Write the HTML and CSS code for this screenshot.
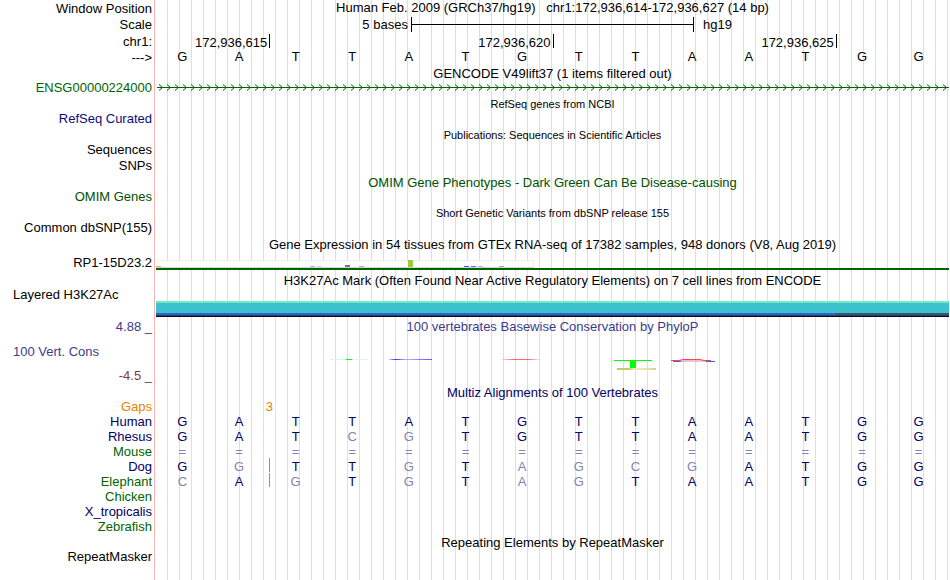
FILE: index.html
```html
<!DOCTYPE html>
<html lang="en">
<head>
<meta charset="utf-8">
<title>Genome tracks chr1:172,936,614-172,936,627</title>
<link rel="stylesheet" href="styles.css">
</head>
<body>
<main class="browser">
  <div class="row mid"><div class="label low">Window Position</div><div class="data title">Human Feb. 2009 (GRCh37/hg19) &nbsp; chr1:172,936,614-172,936,627 (14 bp)</div></div>
  <div class="row tall"><div class="label low">Scale</div><div class="data scale"><span class="scale-size">5 bases</span><span class="scale-bar"><span class="scale-line"></span></span><span class="scale-db">hg19</span></div></div>
  <div class="row tall"><div class="label low">chr1:</div><div class="data ruler"><span class="tick t1">172,936,615</span><span class="tick t2">172,936,620</span><span class="tick t3">172,936,625</span></div></div>
  <div class="row mid"><div class="label">---&gt;</div><div class="data bases ref"><span>G</span><span>A</span><span>T</span><span>T</span><span>A</span><span>T</span><span>G</span><span>T</span><span>T</span><span>A</span><span>A</span><span>T</span><span>G</span><span>G</span></div></div>
  <div class="row"><div class="label"></div><div class="data title">GENCODE V49lift37 (1 items filtered out)</div></div>
  <div class="row high"><div class="label green">ENSG00000224000</div><div class="data">
    <svg class="gene" width="100%" height="15" aria-hidden="true">
      <defs><pattern id="chevron" x="0" y="0" width="8" height="15" patternUnits="userSpaceOnUse"><path d="M3 3.5 L6.5 6.5 L3 9.5" fill="none" stroke="#006400" stroke-width="1"/></pattern></defs>
      <rect x="1" y="0" width="100%" height="15" fill="url(#chevron)"/>
      <rect x="1" y="6" width="100%" height="1" fill="#006400"/>
    </svg></div></div>
  <div class="row mid"><div class="label"></div><div class="data title small">RefSeq genes from NCBI</div></div>
  <div class="row high"><div class="label blue">RefSeq Curated</div><div class="data"></div></div>
  <div class="row lead"><div class="label"></div><div class="data title small">Publications: Sequences in Scientific Articles</div></div>
  <div class="row mid"><div class="label">Sequences</div><div class="data"></div></div>
  <div class="row mid"><div class="label">SNPs</div><div class="data"></div></div>
  <div class="row mid"><div class="label"></div><div class="data title omim low">OMIM Gene Phenotypes - Dark Green Can Be Disease-causing</div></div>
  <div class="row high"><div class="label omim">OMIM Genes</div><div class="data"></div></div>
  <div class="row mid"><div class="label"></div><div class="data title small">Short Genetic Variants from dbSNP release 155</div></div>
  <div class="row high"><div class="label">Common dbSNP(155)</div><div class="data"></div></div>
  <div class="row tall"><div class="label"></div><div class="data title">Gene Expression in 54 tissues from GTEx RNA-seq of 17382 samples, 948 donors (V8, Aug 2019)</div></div>
  <div class="row expression"><div class="label">RP1-15D23.2</div><div class="data">
    <div class="gtex">
      <svg width="378" height="8" shape-rendering="crispEdges" aria-hidden="true">
        <rect width="378" height="8" fill="#f0f0f0"/><rect y="1" width="377" height="6" fill="#fff"/><rect y="7" width="378" height="1" fill="#d3d3d3"/>
        <rect x="0" y="6" width="5" height="1" fill="#ffa54f"/><rect x="154" y="6" width="5" height="1" fill="#9ac0cd"/><rect x="161" y="6" width="5" height="1" fill="#eed5d2"/>
        <rect x="189" y="5" width="5" height="2" fill="#8b7355"/><rect x="203" y="6" width="5" height="1" fill="#cdaa7d"/><rect x="252" y="0" width="5" height="7" fill="#9acd32"/>
        <rect x="308" y="6" width="5" height="1" fill="#3a5fcd"/><rect x="315" y="6" width="5" height="1" fill="#1e90ff"/><rect x="322" y="6" width="5" height="1" fill="#cdb79e"/><rect x="343" y="6" width="5" height="1" fill="#a6a6a6"/>
      </svg>
    </div></div></div>
  <div class="row mid"><div class="label"></div><div class="data title">H3K27Ac Mark (Often Found Near Active Regulatory Elements) on 7 cell lines from ENCODE</div></div>
  <div class="row histone"><div class="label wide">Layered H3K27Ac</div><div class="data">
    <svg class="stretch" width="100%" height="16" viewBox="0 0 793 16" preserveAspectRatio="none" shape-rendering="crispEdges" aria-hidden="true">
      <rect width="793" height="2" fill="#72e8c8"/><rect y="2" width="793" height="10" fill="#3cc2cc"/>
      <rect y="12" width="793" height="2" fill="#2f62cc"/><rect x="680" y="12" width="113" height="2" fill="#34566e"/><rect y="14" width="793" height="1" fill="#284070"/><rect y="15" width="793" height="1" fill="#100820"/>
    </svg></div></div>
  <div class="row conservation"><div class="label limits"><span class="slate">4.88 _</span><span class="name slate">100 Vert. Cons</span><span class="brown">-4.5 _</span></div><div class="data">
    <div class="title slate">100 vertebrates Basewise Conservation by PhyloP</div>
    <svg class="stretch wiggle" width="100%" height="14" viewBox="0 0 793 14" preserveAspectRatio="none" aria-hidden="true">
      <defs>
        <linearGradient id="b"><stop offset="0" stop-color="#44f" stop-opacity=".3"/><stop offset=".15" stop-color="#33f"/><stop offset=".4" stop-color="#44f" stop-opacity=".4"/><stop offset="1" stop-color="#44f" stop-opacity=".9"/></linearGradient>
        <linearGradient id="r"><stop offset="0" stop-color="#f44" stop-opacity=".1"/><stop offset=".3" stop-color="#f44" stop-opacity=".8"/><stop offset=".7" stop-color="#f44" stop-opacity=".8"/><stop offset="1" stop-color="#f44" stop-opacity=".1"/></linearGradient>
        <linearGradient id="y"><stop offset="0" stop-color="#bdbd3a"/><stop offset=".3" stop-color="#bdbd3a"/><stop offset=".45" stop-color="#e9e9b5"/><stop offset=".8" stop-color="#dcdc98"/><stop offset="1" stop-color="#c8c860"/></linearGradient>
      </defs>
      <rect x="174" y="1" width="38" height="1" fill="#dff7df"/><rect x="190" y="1" width="6" height="1" fill="#0f0"/>
      <rect x="233" y="1" width="43" height="1" fill="url(#b)"/><rect x="345" y="1" width="39" height="1" fill="url(#r)"/>
      <rect x="458" y="2" width="38" height="1" fill="#0f0"/><rect x="474" y="2" width="6" height="8" fill="#0f0"/><rect x="461" y="10" width="39" height="2" fill="url(#y)" opacity=".8"/>
      <path d="M517 3.5 H559" stroke="#55f" stroke-opacity=".3"/><path d="M517 3.5 H525 M550 3.5 H559" fill="none" stroke="#55f"/>
      <path d="M523 2.5 H548" stroke="#fbb"/><path d="M515 2.5 H523 L527 1.5 H544 L548 2.5 H555" fill="none" stroke="#f44"/>
    </svg></div></div>
  <div class="row lead"><div class="label"></div><div class="data title navy">Multiz Alignments of 100 Vertebrates</div></div>
  <div class="row"><div class="label gap">Gaps</div><div class="data ruler gap"><span class="gap-count">3</span></div></div>
  <div class="row"><div class="label navy">Human</div><div class="data bases navy"><span>G</span><span>A</span><span>T</span><span>T</span><span>A</span><span>T</span><span>G</span><span>T</span><span>T</span><span>A</span><span>A</span><span>T</span><span>G</span><span>G</span></div></div>
  <div class="row"><div class="label navy">Rhesus</div><div class="data bases navy"><span>G</span><span>A</span><span>T</span><span class="diff">C</span><span class="diff">G</span><span>T</span><span>G</span><span>T</span><span>T</span><span>A</span><span>A</span><span>T</span><span>G</span><span>G</span></div></div>
  <div class="row"><div class="label green">Mouse</div><div class="data bases diff"><span>=</span><span>=</span><span>=</span><span>=</span><span>=</span><span>=</span><span>=</span><span>=</span><span>=</span><span>=</span><span>=</span><span>=</span><span>=</span><span>=</span></div></div>
  <div class="row"><div class="label navy">Dog</div><div class="data bases navy"><span>G</span><span class="diff insert">G</span><span>T</span><span>T</span><span class="diff">G</span><span>T</span><span class="diff">A</span><span class="diff">G</span><span class="diff">C</span><span class="diff">G</span><span>A</span><span>T</span><span>G</span><span>G</span></div></div>
  <div class="row"><div class="label green">Elephant</div><div class="data bases navy"><span class="diff">C</span><span class="insert">A</span><span class="diff">G</span><span>T</span><span class="diff">G</span><span>T</span><span class="diff">A</span><span class="diff">G</span><span>T</span><span>A</span><span>A</span><span>T</span><span>G</span><span>G</span></div></div>
  <div class="row"><div class="label green">Chicken</div><div class="data"></div></div>
  <div class="row"><div class="label navy">X_tropicalis</div><div class="data"></div></div>
  <div class="row"><div class="label green">Zebrafish</div><div class="data"></div></div>
  <div class="row lead"><div class="label"></div><div class="data title">Repeating Elements by RepeatMasker</div></div>
  <div class="row"><div class="label">RepeatMasker</div><div class="data"></div></div>
</main>
</body>
</html>
```
FILE: styles.css
```css
body {
  margin: 0;
  background: #fff;
  color: #000;
  font: 13px/15px "Liberation Sans", Arial, sans-serif;
}

/* Pink divider after the label column, then a guide line every 12px. */
.browser {
  min-height: 100vh;
  background:
    linear-gradient(#ffb4b4, #ffb4b4) 154px 0 / 1px 100% no-repeat,
    repeating-linear-gradient(90deg, #dcdcf8 0 1px, transparent 1px 12px) 167px 0 no-repeat;
}

.row {
  display: grid;
  grid-template-columns: 152px minmax(0, 1fr);
  column-gap: 4px;
  min-height: 15px;
  padding-right: 1px;
  white-space: nowrap;
}
.mid { height: 16px; line-height: 16px; }
.tall { height: 17px; line-height: 17px; }
.high { line-height: 13px; }
.lead { height: 15px; line-height: 17px; }

.label { text-align: right; }
.label.wide { text-align: left; padding-left: 13px; line-height: 12px; }
.low { line-height: 18px; }
.title { text-align: center; }
.small { font-size: 11px; }

.green { color: #006400; }
.omim { color: #005000; }
.blue { color: #0c0c78; }
.navy { color: #000064; }
.slate { color: #3c3c8c; }
.brown { color: #783c3c; }
.gap { color: #e68200; }
.diff { color: #8282b4; }

.scale {
  display: grid;
  grid-template-columns: repeat(28, minmax(0, 1fr));
}
.scale-size { grid-column: 1 / 10; text-align: right; padding-right: 3px; }
.scale-bar {
  grid-column: 10 / 20;
  display: flex;
  align-items: center;
  height: 15px;
  margin-top: 1px;
  border: solid #000;
  border-width: 0 1px;
}
.scale-line { flex: 1; height: 1px; background: #000; }
.scale-db { grid-column: 20 / 29; padding-left: 9px; }

.bases,
.ruler {
  display: grid;
  grid-template-columns: repeat(14, minmax(0, 1fr));
}
.bases span { text-align: center; padding-right: 4px; }
.ref { line-height: 14px; }

.tick {
  height: 14px;
  margin: 1px -1px 0 0;
  padding-right: 2px;
  border-right: 1px solid #000;
  text-align: right;
}
.t1 { grid-column: 1 / 3; }
.t2 { grid-column: 3 / 8; }
.t3 { grid-column: 8 / 13; }

.gap-count { grid-column: 2 / 4; text-align: center; }
.insert { position: relative; }
.insert::after {
  content: "";
  position: absolute;
  top: -1px;
  right: -1px;
  width: 1px;
  height: 14px;
  background: #e68200;
}

svg { display: block; }

.expression { line-height: 20px; }
.gtex { margin-top: 7px; border-bottom: 2px solid #006400; }

.histone { padding-bottom: 2px; }
.histone .stretch { margin-top: 12px; }

.conservation { min-height: 65px; }
.limits { display: flex; flex-direction: column; justify-content: space-between; padding-bottom: 1px; }
.limits .name { text-align: left; padding-left: 13px; }
.conservation .title { line-height: 16px; }
.wiggle { margin-top: 23px; }
```
